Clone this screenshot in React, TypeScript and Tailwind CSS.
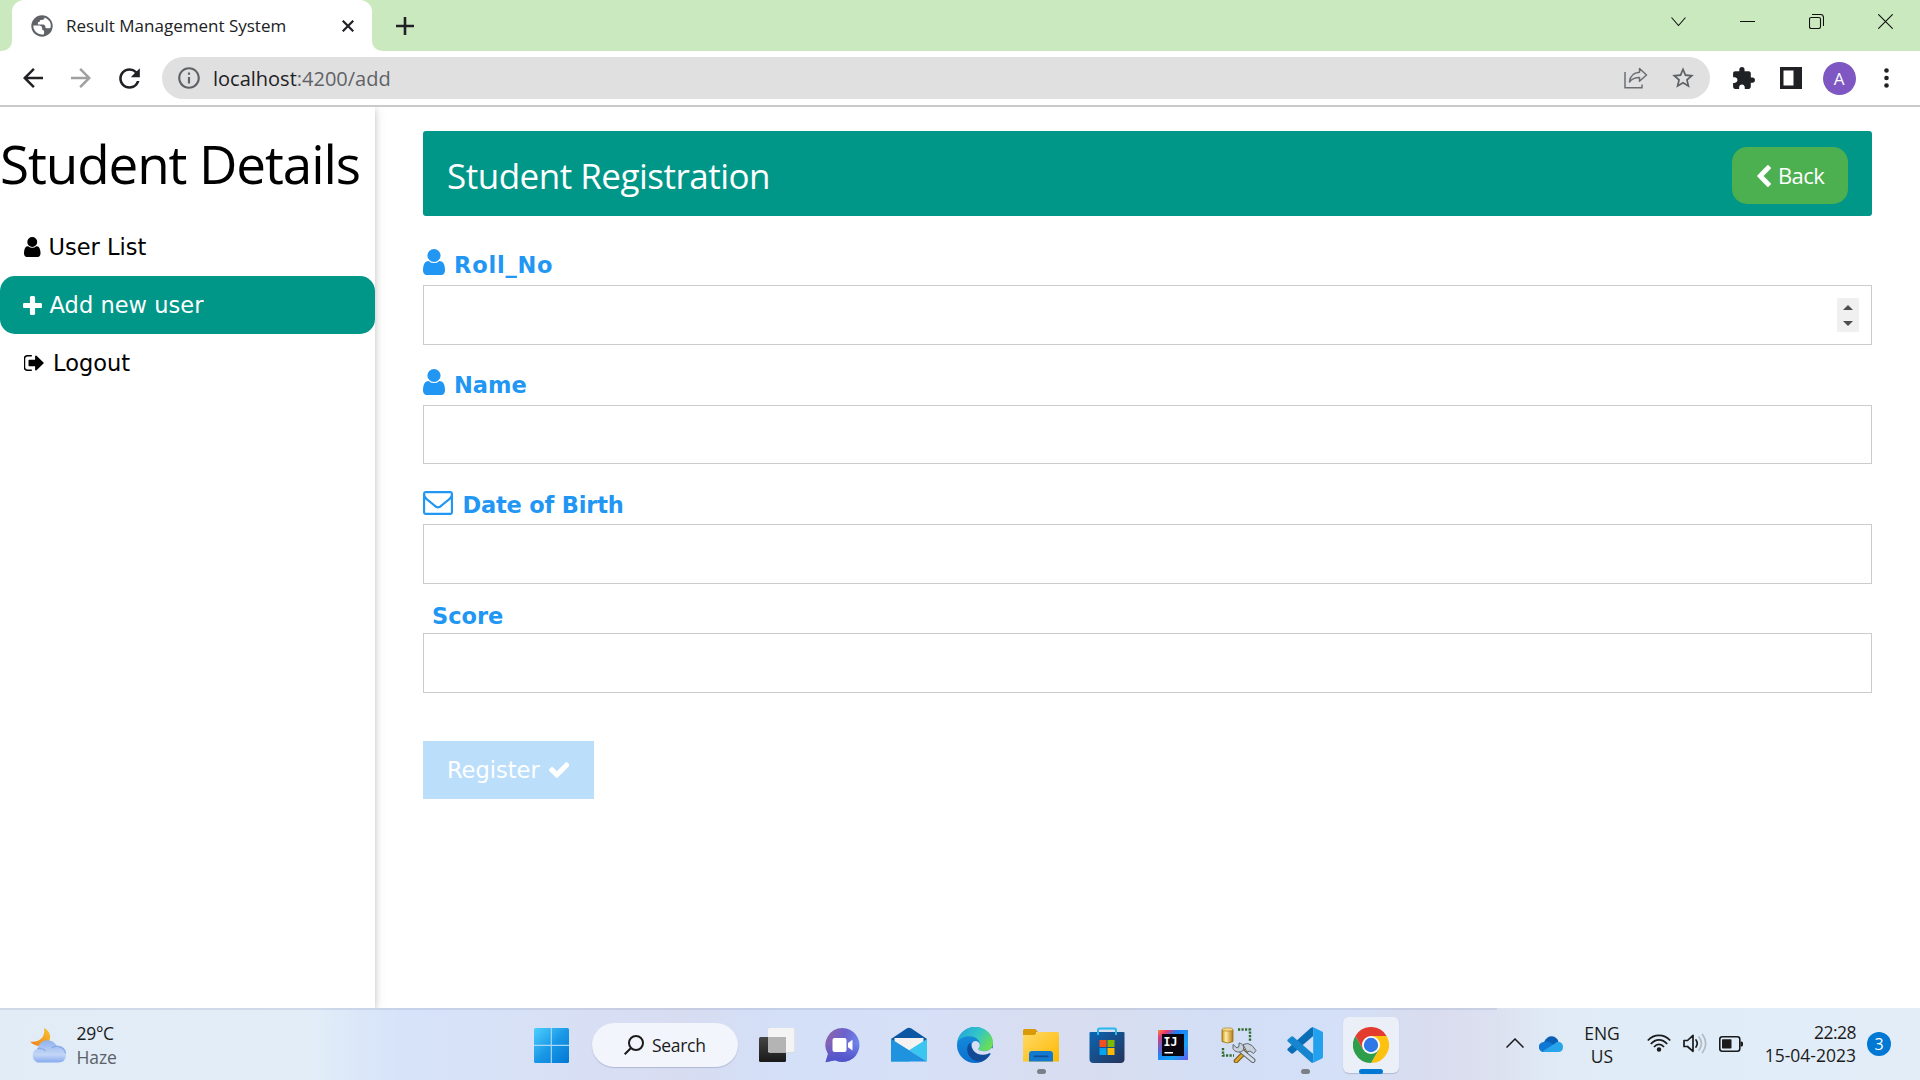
import React from "react";
import { MdArrowBack, MdArrowForward, MdExtension, MdInfoOutline, MdRefresh, MdStarBorder } from "react-icons/md";

type GlyphName = "user" | "plus" | "logout" | "envelope" | "chevron" | "check";

const GLYPHS: Record<GlyphName, { box: string; d: string }> = {
  user: {
    box: "256 128 1280 1536",
    d: "M1536 1399q0 109-62.5 187t-150.5 78h-854q-88 0-150.5-78t-62.5-187q0-85 8.5-160.5t31.5-152 58.5-131 94-89 134.5-34.5q131 128 313 128t313-128q76 0 134.5 34.5t94 89 58.5 131 31.5 152 8.5 160.5zm-256-887q0 159-112.5 271.5t-271.5 112.5-271.5-112.5-112.5-271.5 112.5-271.5 271.5-112.5 271.5 112.5 112.5 271.5z",
  },
  plus: {
    box: "192 128 1408 1408",
    d: "M1600 736v192q0 40-28 68t-68 28h-416v416q0 40-28 68t-68 28h-192q-40 0-68-28t-28-68v-416h-416q-40 0-68-28t-28-68v-192q0-40 28-68t68-28h416v-416q0-40 28-68t68-28h192q40 0 68 28t28 68v416h416q40 0 68 28t28 68z",
  },
  logout: {
    box: "96 256 1555 1280",
    d: "M704 1440q0 4 1 20t.5 26.5-3 23.5-10 19.5-20.5 6.5h-320q-119 0-203.5-84.5t-84.5-203.5v-704q0-119 84.5-203.5t203.5-84.5h320q13 0 22.5 9.5t9.5 22.5q0 4 1 20t.5 26.5-3 23.5-10 19.5-20.5 6.5h-320q-66 0-113 47t-47 113v704q0 66 47 113t113 47h312l11.5 1 11.5 3 8 5.5 7 9 2 13.5zm928-544q0 26-19 45l-544 544q-19 19-45 19t-45-19-19-45v-288h-448q-26 0-45-19t-19-45v-384q0-26 19-45t45-19h448v-288q0-26 19-45t45-19 45 19l544 544q19 19 19 45z",
  },
  envelope: {
    box: "0 256 1792 1408",
    d: "M1664 1504v-768q-32 36-69 66-268 206-426 338-51 43-83 67t-86.5 48.5-102.5 24.5h-2q-48 0-102.5-24.5t-86.5-48.5-83-67q-158-132-426-338-37-30-69-66v768q0 13 9.5 22.5t22.5 9.5h1472q13 0 22.5-9.5t9.5-22.5zm0-1051v-24.5l-.5-13-3-12.5-5.5-9-9-7.5-14-2.5h-1472q-13 0-22.5 9.5t-9.5 22.5q0 168 147 284 193 152 401 317 6 5 35 29.5t46 37.5 44.5 31.5 50.5 27.5 43 9h2q20 0 43-9t50.5-27.5 44.5-31.5 46-37.5 35-29.5q208-165 401-317 54-43 100.5-115.5t46.5-131.5zm128-37v1088q0 66-47 113t-113 47h-1472q-66 0-113-47t-47-113v-1088q0-66 47-113t113-47h1472q66 0 113 47t47 113z",
  },
  chevron: {
    box: "410 26 1036 1612",
    d: "M1427 301l-531 531 531 531q19 19 19 45t-19 45l-166 166q-19 19-45 19t-45-19l-742-742q-19-19-19-45t19-45l742-742q19-19 45-19t45 19l166 166q19 19 19 45t-19 45z",
  },
  check: {
    box: "121 334 1550 1188",
    d: "M1671 566q0 40-28 68l-724 724-136 136q-28 28-68 28t-68-28l-136-136-362-362q-28-28-28-68t28-68l136-136q28-28 68-28t68 28l294 295 656-657q28-28 68-28t68 28l136 136q28 28 28 68z",
  },
};

function Glyph({ name, className }: { name: GlyphName; className: string }) {
  const g = GLYPHS[name];
  return (
    <svg viewBox={g.box} preserveAspectRatio="none" fill="currentColor" className={`shrink-0 ${className}`}>
      <path d={g.d} />
    </svg>
  );
}

/* ---------- Browser chrome ---------- */

function TabStrip() {
  return (
    <div className="flex h-[51px] shrink-0 bg-white">
      <div className="w-3 rounded-br-[10px] bg-[#cbe9bf]" />
      <div className="w-[360px] bg-[#cbe9bf]">
        <div className="flex h-full items-center rounded-t-[12px] bg-white pl-[19px] pr-[18px]">
          <svg viewBox="0 0 22 22" className="size-[22px] shrink-0">
            <circle cx="11" cy="11" r="10.7" fill="#5f6368" />
            <path
              d="M2.300 10.500L8.500 10.600Q11 10.800 11.200 13v1.800q2.300.2 2 2.200l-.3 2.300Q9 20.300 5.800 17.800 2.300 15 2.300 10.500z"
              fill="#fff"
            />
            <path
              d="M13.800 2.600Q13.500 5 11 5H9.300q-.3 2.300-2.500 2.400l.2 2h5.500q1.700.2 1.900 2.200l.1 1.500q2.500.3 5-.2Q21 6 13.800 2.600z"
              fill="#fff"
            />
          </svg>
          <span className="ml-[13px] flex-1 whitespace-nowrap text-[17px] leading-6 text-[#202124]">
            Result Management System
          </span>
          <svg viewBox="0 0 12 12" className="size-3 shrink-0" stroke="#202124" strokeWidth="2.2">
            <path d="M.7.7l10.600 10.600M11.300.7L.7 11.300" />
          </svg>
        </div>
      </div>
      <div className="flex flex-1 items-start rounded-bl-[10px] bg-[#cbe9bf] pl-[24px]">
        <svg viewBox="0 0 18 18" className="mt-[17px] size-[18px]" stroke="#202124" strokeWidth="2.600">
          <path d="M9 0v18M0 9h18" />
        </svg>
        <div className="ml-auto mt-[14px] flex h-[15px] items-center gap-[54px] pr-[27px]">
          <svg viewBox="0 0 15 15" className="size-[15px]" fill="none" stroke="#111" strokeWidth="1.100">
            <path d="M.5 3.500l7 8 7-8" />
          </svg>
          <svg viewBox="0 0 15 15" className="size-[15px]">
            <path d="M0 7h15v1H0z" fill="#111" />
          </svg>
          <svg viewBox="0 0 15 15" className="size-[15px]" fill="none" stroke="#111" strokeWidth="1.100">
            <rect x=".5" y="3.500" width="11" height="11" rx="1.700" />
            <path d="M3 .5h8.500q3 0 3 3V12" />
          </svg>
          <svg viewBox="0 0 15 15" className="size-[15px]" stroke="#111" strokeWidth="1.100">
            <path d="M.3.3l14.400 14.400M14.700.3L.3 14.700" />
          </svg>
        </div>
      </div>
    </div>
  );
}

function Toolbar() {
  return (
    <div className="flex h-[56px] shrink-0 items-center border-b-2 border-[#cacaca] bg-white pl-[18px] text-[#202124]">
      <MdArrowBack className="size-[30px] shrink-0" />
      <MdArrowForward className="ml-[18px] size-[30px] shrink-0 text-[#a0a0a0]" />
      <MdRefresh className="ml-[18px] size-[31px] shrink-0" />
      <div className="ml-[17px] flex h-[42px] w-[1548px] shrink-0 items-center rounded-full bg-[#e0e0e0] pl-[14px] pr-[14px] text-[#5f6368]">
        <MdInfoOutline className="size-[26px] shrink-0" />
        <span className="ml-[11px] mt-px whitespace-nowrap text-[20px] leading-7">
          <span className="text-[#202124]">localhost</span>
          <span>:4200/add</span>
        </span>
        <svg viewBox="0 0 24 22" className="ml-auto h-[22px] w-6 shrink-0" fill="none" stroke="#6b6f74" strokeWidth="1.500">
          <path d="M1 5v15.700h17V17.500" />
          <path d="M15.500 1.500l7 6.500-7 6.200v-3.700c-4.500 0-7.500 1.200-10 4.500.5-5 3.500-9.200 10-9.700z" strokeLinejoin="round" />
        </svg>
        <MdStarBorder className="ml-[22.500px] size-[26px] shrink-0" />
      </div>
      <MdExtension className="ml-[20.500px] size-[25px] shrink-0" />
      <svg viewBox="0 0 22 22" className="ml-[24px] size-[22px] shrink-0">
        <path d="M0 0h22v22H0zM3.500 3.500v15h10v-15z" fillRule="evenodd" fill="#202124" />
      </svg>
      <div className="ml-[21px] flex size-[33px] shrink-0 items-center justify-center rounded-full bg-[#7e57c2] text-[17px] leading-none text-white">
        A
      </div>
      <svg viewBox="0 0 5 20" className="ml-[28.500px] h-5 w-[5px] shrink-0" fill="#202124">
        <circle cx="2.500" cy="2.500" r="2.300" />
        <circle cx="2.500" cy="10" r="2.300" />
        <circle cx="2.500" cy="17.500" r="2.300" />
      </svg>
    </div>
  );
}

/* ---------- Page ---------- */

function Sidebar() {
  return (
    <aside className="z-10 w-[375px] shrink-0 bg-white pt-[17px] text-black shadow-[0_2px_6px_rgba(0,0,0,0.16),0_2px_12px_rgba(0,0,0,0.12)]">
      <h1 className="mb-[14px] whitespace-nowrap text-[53px] leading-[80px] tracking-[-1.100px]">Student Details</h1>
      <nav className="font-['DejaVu_Sans',sans-serif] text-[22.500px] leading-7">
        <a className="flex h-[58px] items-center pl-6">
          <Glyph name="user" className="mr-[8px] h-5 w-[16.500px]" />
          User List
        </a>
        <a className="flex h-[58px] items-center rounded-[15px] bg-[#009688] pl-[23px] text-white">
          <Glyph name="plus" className="mr-[7.500px] size-[19px]" />
          <span className="tracking-[0.050px]">Add new user</span>
        </a>
        <a className="flex h-[58px] items-center pl-6">
          <Glyph name="logout" className="mr-[9px] h-[16px] w-[20px]" />
          Logout
        </a>
      </nav>
    </aside>
  );
}

const LABEL = "flex items-end font-bold leading-7 text-[#2196f3]";
const BOX = "border border-[#cccccc] bg-white";

function Form() {
  return (
    <main className="flex-1 bg-white px-12 pt-6">
      <header className="flex h-[85px] items-center rounded-[3px] bg-[#009688] pl-[24px] pr-[24px] text-white">
        <h2 className="mt-[5px] whitespace-nowrap text-[35px] leading-[52px] tracking-[-0.500px]">Student Registration</h2>
        <button className="ml-auto mt-1 flex h-[57px] w-[116px] items-center rounded-[15px] bg-[#4caf50] pl-[25px] text-[22px] tracking-[-0.600px]">
          <Glyph name="chevron" className="mr-[7px] h-[22px] w-[14px]" />
          <span className="-mt-[2px] leading-8">Back</span>
        </button>
      </header>
      <form className="font-['DejaVu_Sans',sans-serif] text-[22.500px]">
        <label className={`${LABEL} h-[69px] pb-[6px]`}>
          <Glyph name="user" className="mb-1 mr-[9px] h-[26px] w-[22px]" />
          <span className="tracking-[0.800px]">Roll_No</span>
        </label>
        <div className={`${BOX} flex h-[60px] items-center justify-end pr-3`}>
          <div className="flex h-[34px] w-[22px] flex-col items-center justify-center gap-[11px] bg-[#f0f0f0]">
            <svg viewBox="0 0 10 5" className="h-[5px] w-[10px]" fill="#4d4d4d">
              <path d="M0 5l5-5 5 5z" />
            </svg>
            <svg viewBox="0 0 10 5" className="h-[5px] w-[10px]" fill="#4d4d4d">
              <path d="M0 0l5 5 5-5z" />
            </svg>
          </div>
        </div>
        <label className={`${LABEL} h-[60px] pb-[6px]`}>
          <Glyph name="user" className="mb-1 mr-[9px] h-[26px] w-[22px]" />
          Name
        </label>
        <div className={`${BOX} h-[59px]`} />
        <label className={`${LABEL} h-[60px] pb-[5px]`}>
          <Glyph name="envelope" className="mb-1 mr-[9.500px] h-[24px] w-[30px]" />
          <span className="tracking-[-0.180px]">Date of Birth</span>
        </label>
        <div className={`${BOX} h-[60px]`} />
        <label className={`${LABEL} h-[49px] pb-[3px] pl-[9px]`}>Score</label>
        <div className={`${BOX} h-[60px]`} />
        <button className="mt-12 flex h-[58px] w-[171px] items-center bg-[#bbdefb] pl-[24px] leading-7 text-white">
          Register
          <Glyph name="check" className="ml-[9px] h-[16px] w-[20.500px]" />
        </button>
      </form>
    </main>
  );
}

/* ---------- Taskbar ---------- */

function Defs() {
  return (
    <svg className="absolute size-0">
      <defs>
        <linearGradient id="moon" x1="1" y1="0" x2="0" y2="1">
          <stop offset="0" stopColor="#f7c52f" />
          <stop offset="1" stopColor="#ef7d1a" />
        </linearGradient>
        <linearGradient id="cloud" x1="0" y1="0" x2="0" y2="1">
          <stop offset="0" stopColor="#8fb2ee" />
          <stop offset=".65" stopColor="#c3d6f6" />
          <stop offset="1" stopColor="#86aaf0" />
        </linearGradient>
        <linearGradient id="win" x1="0" y1="0" x2="1" y2="1" gradientUnits="objectBoundingBox">
          <stop offset="0" stopColor="#4fd0ff" />
          <stop offset=".5" stopColor="#1a98e6" />
          <stop offset="1" stopColor="#0078d4" />
        </linearGradient>
        <linearGradient id="tvDark" x1="0" y1="0" x2="0" y2="1">
          <stop offset="0" stopColor="#454545" />
          <stop offset="1" stopColor="#191919" />
        </linearGradient>
        <linearGradient id="chat" x1="0" y1=".3" x2="1" y2=".6">
          <stop offset="0" stopColor="#8b62ad" />
          <stop offset=".5" stopColor="#6a62cd" />
          <stop offset="1" stopColor="#6f8df2" />
        </linearGradient>
        <linearGradient id="chatLow" x1="0" y1="0" x2="0" y2="1">
          <stop offset=".45" stopColor="#5558cc" stopOpacity="0" />
          <stop offset=".9" stopColor="#5356cb" />
        </linearGradient>
        <linearGradient id="edgeTop" x1="0" y1=".2" x2="1" y2=".7">
          <stop offset="0" stopColor="#24a5dd" />
          <stop offset=".5" stopColor="#32c5c8" />
          <stop offset="1" stopColor="#6fe04c" />
        </linearGradient>
        <linearGradient id="edgeMid" x1="0" y1="0" x2="0" y2="1">
          <stop offset="0" stopColor="#1793dd" />
          <stop offset="1" stopColor="#0b6fd0" />
        </linearGradient>
        <linearGradient id="folder" x1="0" y1="0" x2="1" y2="1">
          <stop offset="0" stopColor="#ffd968" />
          <stop offset="1" stopColor="#fdb900" />
        </linearGradient>
        <linearGradient id="store" x1="0" y1="0" x2="1" y2="1">
          <stop offset="0" stopColor="#0a66b4" />
          <stop offset="1" stopColor="#26335a" />
        </linearGradient>
        <linearGradient id="ij" x1="0" y1="0" x2="1" y2="1">
          <stop offset="0" stopColor="#fc8a3c" />
          <stop offset=".16" stopColor="#f0356b" />
          <stop offset=".34" stopColor="#1f7cf5" />
          <stop offset=".7" stopColor="#16a2f5" />
          <stop offset="1" stopColor="#6b57f0" />
        </linearGradient>
        <linearGradient id="db" x1="0" y1="0" x2="1" y2="0">
          <stop offset="0" stopColor="#c98c14" />
          <stop offset=".35" stopColor="#fff0a8" />
          <stop offset="1" stopColor="#b97a10" />
        </linearGradient>
      </defs>
    </svg>
  );
}

function TaskIcon({ children, tile, mark }: { children: React.ReactNode; tile?: boolean; mark?: string }) {
  return (
    <div className="relative flex h-full w-[66px] shrink-0 items-center justify-center">
      <div className={`flex size-14 items-center justify-center rounded-md ${tile ? "bg-[#ebeff8] shadow-[0_1px_1px_rgba(90,100,140,0.3)]" : ""}`}>
        <svg viewBox="0 0 36 36" className="size-9">
          {children}
        </svg>
      </div>
      {mark && <div className={`absolute bottom-[6px] h-[5px] rounded-full ${mark}`} />}
    </div>
  );
}

function TaskIcons() {
  return (
    <>
      <TaskIcon>
        <rect x="0" y="10" width="27" height="25" rx="1.500" fill="url(#tvDark)" />
        <rect x="9.200" y="1.200" width="26.600" height="24.500" rx="1.500" fill="#d9d9d9" />
        <rect x="9" y="1" width="26.300" height="24" rx="1.500" fill="#f4f4f4" />
        <path d="M9 10h18v15H10.500Q9 25 9 23.500z" fill="#b4b4b4" />
      </TaskIcon>
      <TaskIcon>
        <path d="M17.500 1a17 17 0 1 1-7.500 32.300L.5 35.200 3 27A17 17 0 0 1 17.500 1z" fill="url(#chat)" />
        <path d="M17.500 1a17 17 0 1 1-7.500 32.300L.5 35.200 3 27A17 17 0 0 1 17.500 1z" fill="url(#chatLow)" />
        <rect x="7.500" y="11" width="14" height="14" rx="2" fill="#fff" />
        <path d="M23 16l4.500-3.300v10.800L23 20.200z" fill="#fff" />
      </TaskIcon>
      <TaskIcon>
        <path d="M0 12L16 1.300q2-1.200 4 0L36 12v8H0z" fill="#0b57a4" />
        <path d="M3.500 11h29v12h-29z" fill="#f5f3f2" />
        <path d="M0 12l18 11.500V34.500H0z" fill="#27a7e8" />
        <path d="M36 12v22.500L18 23.200z" fill="#3bc5f1" />
        <path d="M18 23.200L36 34.500H0V12z" fill="#1f93de" />
      </TaskIcon>
      <TaskIcon>
        <circle cx="18" cy="18" r="18" fill="url(#edgeMid)" />
        <path d="M.2 15.500C1.500 6.500 9 0 18 0c10.500 0 18 7.500 18 15.500 0 5-3.500 8.700-8.500 8.700-4 0-6.200-1.200-6.200-2.400 0-.9 1.500-1.600 1.500-4.600 0-4-4-8-10.300-8C7 9.200 2 11.500.2 15.500z" fill="url(#edgeTop)" />
        <path d="M13.500 15.500c-4 3-4.500 9-1 13.800 3 4.200 8.500 6.500 13 5 3.500-1.700 6.500-5.200 7.700-7.800.3-.8-.4-1.200-1.200-.8-6.500 3.300-14 1.300-16.800-3.700-1.500-2.500-1.700-4.500-1.700-6.500z" fill="#114a95" />
        <path d="M15 16.500c1-2.500 4-3.200 6.200-1.400 1 .8 1.600 2 1.600 3 0 2.500-1.500 3-1.500 3.900 0 1.200 2.200 2.200 6.200 2.200 3 0 5.500-1.200 7-3.200l1.700.6c0 2.200-.8 4-1.700 5.300-1-.9-1.800-.9-2.800-.5-5.500 2.600-12.500 1-15.200-3-1.500-2.200-2.200-4.700-1.500-6.900z" fill="#d8dff4" />
      </TaskIcon>
      <TaskIcon mark="w-[9px] bg-[#7b7f88]">
        <path d="M0 3.500Q0 2 1.500 2h10q1 0 1.700.8L15 5h-2v5H0z" fill="#d99a06" />
        <path d="M0 8h10.500q1.500 0 2.500-1.200L14.500 5H34.500q1.500 0 1.500 1.500V34.500H0z" fill="url(#folder)" />
        <path d="M6 34.500V27q0-3 3-3h18q3 0 3 3v7.500z" fill="#1279ce" />
        <rect x="10.500" y="28.500" width="15" height="1.800" rx=".9" fill="#0b4f96" />
      </TaskIcon>
      <TaskIcon>
        <path d="M9 7V3q0-1.500 1.500-1.500h15Q27 1.500 27 3v4" fill="none" stroke="#27b8ec" strokeWidth="2" />
        <path d="M.5 6Q.5 5 1.500 5h33q1 0 1 1v26q0 4-4 4h-27q-4 0-4-4z" fill="url(#store)" />
        <path d="M8 5v3h2V5zM26 5v3h2V5z" fill="#27b8ec" />
        <path d="M10.500 13h7v7h-7z" fill="#f25022" />
        <path d="M18.500 13h7v7h-7z" fill="#7fba00" />
        <path d="M10.500 21h7v7h-7z" fill="#00a4ef" />
        <path d="M18.500 21h7v7h-7z" fill="#ffb900" />
      </TaskIcon>
      <TaskIcon>
        <rect x="3" y="3" width="30" height="30" fill="url(#ij)" />
        <path d="M3 9v15l4 5V7z" fill="#b04aa0" fillOpacity=".45" />
        <rect x="7" y="7" width="22" height="22" fill="#080410" />
        <text x="8.500" y="18.500" fill="#fff" fontFamily="DejaVu Sans Mono" fontWeight="700" fontSize="11.500">IJ</text>
        <path d="M9.500 25h8.500v1.500H9.500z" fill="#fff" />
      </TaskIcon>
      <TaskIcon>
        <path d="M1 2.500h11v12q-5.500 3-11 0z" fill="url(#db)" stroke="#9a6a12" strokeWidth=".8" />
        <ellipse cx="6.500" cy="2.500" rx="5.500" ry="1.600" fill="#f8dc82" stroke="#9a6a12" strokeWidth=".6" />
        <path d="M17 2.500h12v12M2 21v7.500h11" fill="none" stroke="#2f6b2f" strokeWidth="2.400" strokeDasharray="2.200 1.300" />
        <path d="M15 34l12-12" stroke="#7a5a18" strokeWidth="4.600" strokeLinecap="round" />
        <path d="M15 34l11-11" stroke="#e0a62a" strokeWidth="2.600" strokeLinecap="round" />
        <path d="M22 17.500q5-2.500 9 1l4 5-2.500 3-3.500-2.500-3 1z" fill="#c9d1da" stroke="#5f6873" strokeWidth="1" />
        <path d="M18 22l14 11.500" stroke="#5f6873" strokeWidth="5" strokeLinecap="round" />
        <path d="M18 22l14 11.500" stroke="#d6dde5" strokeWidth="3" strokeLinecap="round" />
        <path d="M12 17.500l4 3.500 2-1.500V16c4 .5 5.500 4 4 7.500-3 2.500-8.500 2-10-2z" fill="#c9d1da" stroke="#5f6873" strokeWidth="1" />
      </TaskIcon>
      <TaskIcon mark="w-[9px] bg-[#7b7f88]">
        <path d="M26.200.3v8.700L6.300 26.300q-1 .8-2 .1L.8 23.500q-1-.9 0-1.900L24 .8q1.200-.8 2.200-.5z" fill="#0b6db5" />
        <path d="M26.200 35.700V27L6.300 9.700q-1-.8-2-.1L.8 12.500q-1 .9 0 1.900L24 35.200q1.200.8 2.200.5z" fill="#1686d0" />
        <path d="M26.200.3L35 4.600Q36 5 36 6.200v23.600q0 1.200-1 1.600l-8.800 4.300z" fill="#23a0ee" />
      </TaskIcon>
      <TaskIcon tile mark="w-6 bg-[#0078d4]">
        <path d="M18 9h15.600A18 18 0 0 1 18 36l7.800-13.500z" fill="#fdc20f" />
        <path d="M10.200 22.500L2.400 9A18 18 0 0 0 18 36l7.800-13.500z" fill="#2f9e4b" />
        <path d="M18 9h15.600A18 18 0 0 0 2.400 9l7.800 13.500z" fill="#e33b2e" />
        <circle cx="18" cy="18" r="9" fill="#fff" />
        <circle cx="18" cy="18" r="7.200" fill="#3078e8" />
      </TaskIcon>
    </>
  );
}

function Taskbar() {
  return (
    <footer className="flex h-[72px] shrink-0 flex-col bg-[linear-gradient(90deg,#e1ecf7_0px,#e2edf8_310px,#d6e3f9_400px,#d8e0f5_560px,#d7dcf1_680px,#d3e0f8_790px,#d6e0f7_900px,#d8ddf0_1080px,#d2dff6_1260px,#d4e0f7_1340px,#d9dcee_1430px,#dce0f0_1490px,#e0ebf6_1560px,#e0edf8_1740px,#e3edf8_1920px)] text-[17.500px] text-[#1b1b1b]">
      <div className="h-[2px] w-[1497px] shrink-0 bg-[#8090b0]/20" />
      <div className="flex flex-1 items-center">
        <svg viewBox="0 0 36 36" className="ml-[29.500px] size-9 shrink-0">
          <path d="M14 1c6 3 8 9 4.500 14.500C14 20 5 20.500 0 14.500 9 16 16 10 14 1z" fill="url(#moon)" />
          <path d="M7.500 35.500A7.500 7.500 0 0 1 7.500 21.500 Q10 13.200 17.500 13.200q6.500 0 9.500 6Q36 19.200 36 27.500q0 8-8 8z" fill="url(#cloud)" />
          <path d="M7.500 21.500q5-1 8 2.500M22 21q2.500-2.500 7-1.500 6 1.500 6.500 7" fill="none" stroke="#6f95e0" strokeOpacity=".6" strokeWidth="1.300" />
        </svg>
        <div className="ml-[11px] w-[120px] leading-6">
          <div className="tracking-[-0.300px]">29°C</div>
          <div className="tracking-[-0.100px] text-[#5b6066]">Haze</div>
        </div>
        <svg viewBox="0 0 35 35" className="ml-[337.500px] size-[35px] shrink-0" fill="url(#win)">
          <rect width="35" height="35" rx="1.500" />
          <path d="M16.700 0h1.200v35h-1.200zM0 16.700h35v1.200H0z" fill="#a8d8f8" />
        </svg>
        <div className="ml-[23px] flex h-[44px] w-[146px] shrink-0 items-center rounded-full bg-[#f2f5fc] pl-[32px] shadow-[0_1px_1px_rgba(90,100,140,0.3)]">
          <svg viewBox="0 0 20 20" className="size-5 shrink-0" fill="none" stroke="#1b1b1b" strokeWidth="2">
            <circle cx="12" cy="8" r="7" />
            <path d="M7 13l-6.300 6.300" />
          </svg>
          <span className="ml-[8px] mt-px tracking-[-0.300px]">Search</span>
        </div>
        <div className="ml-[6px] flex h-full">
          <TaskIcons />
        </div>
        <svg viewBox="0 0 18 10" className="ml-[102px] mt-[-4px] h-[10px] w-[18px] shrink-0" fill="none" stroke="#1b1b1b" strokeWidth="1.500">
          <path d="M.5 9.500L9 1l8.500 8.500" />
        </svg>
        <svg viewBox="0 0 24 16" className="ml-[15px] mt-[-2px] h-4 w-6 shrink-0">
          <path d="M5 6Q8 0 13 0.300q5 .7 6.500 5.200L12 11z" fill="#0a5fb5" />
          <path d="M5 16a5 5 0 0 1-.5-10q3-1.200 6 .3L20 12l-3 4z" fill="#0f78d4" />
          <path d="M4 15l12-7.500Q18 5 20.500 6 24 7 24 11q0 5-5 5H5z" fill="#28a4ea" />
        </svg>
        <div className="ml-[19px] w-[40px] text-center leading-[23px]">
          <div>ENG</div>
          <div>US</div>
        </div>
        <svg viewBox="0 0 24 18" className="ml-[25px] mt-[-4px] h-[18px] w-6 shrink-0" fill="none" stroke="#1b1b1b" strokeWidth="1.700">
          <path d="M.8 6.500Q5.500 1.300 12 1.300T23.200 6.500M3.800 10Q7.500 5.800 12 5.800T20.200 10M7 13Q9.200 10.300 12 10.300T17 13" />
          <circle cx="12" cy="15.500" r="1.400" fill="#1b1b1b" />
        </svg>
        <svg viewBox="0 0 24 21" className="ml-3 mt-[-3px] h-[21px] w-6 shrink-0" fill="none" strokeWidth="1.700" strokeLinecap="round" strokeLinejoin="round">
          <path d="M1 7.500h3.500L10 2.300v16L4.500 13.500H1z" stroke="#1b1b1b" />
          <path d="M13 7q2.500 3.300 0 7" stroke="#1b1b1b" />
          <path d="M16 4q5 6.500 0 13M19.500 1.500q6.500 9 0 18" stroke="#b4bac2" />
        </svg>
        <svg viewBox="0 0 24 16" className="ml-3 mt-[-2px] h-4 w-6 shrink-0">
          <rect x=".8" y=".8" width="20" height="14.400" rx="2.500" fill="none" stroke="#1b1b1b" strokeWidth="1.600" />
          <rect x="3" y="3.300" width="9.500" height="9.200" rx=".8" fill="#1b1b1b" />
          <path d="M21.500 5.500h1q1.500 0 1.500 1.500v2q0 1.500-1.500 1.500h-1z" fill="#1b1b1b" />
        </svg>
        <div className="ml-auto pb-[2px] text-right leading-[23px]">
          <div className="tracking-[-0.500px]">22:28</div>
          <div>15-04-2023</div>
        </div>
        <div className="ml-[11px] mr-[29px] mt-[-2px] flex size-6 shrink-0 items-center justify-center rounded-full bg-[#0078d4] text-[16px] leading-none text-white">
          3
        </div>
      </div>
    </footer>
  );
}

export default function App() {
  return (
    <div className="flex h-[1080px] w-[1920px] flex-col overflow-hidden bg-white font-['Open_Sans','Noto_Sans',sans-serif]">
      <Defs />
      <TabStrip />
      <Toolbar />
      <div className="flex min-h-0 flex-1 overflow-hidden">
        <Sidebar />
        <Form />
      </div>
      <Taskbar />
    </div>
  );
}
